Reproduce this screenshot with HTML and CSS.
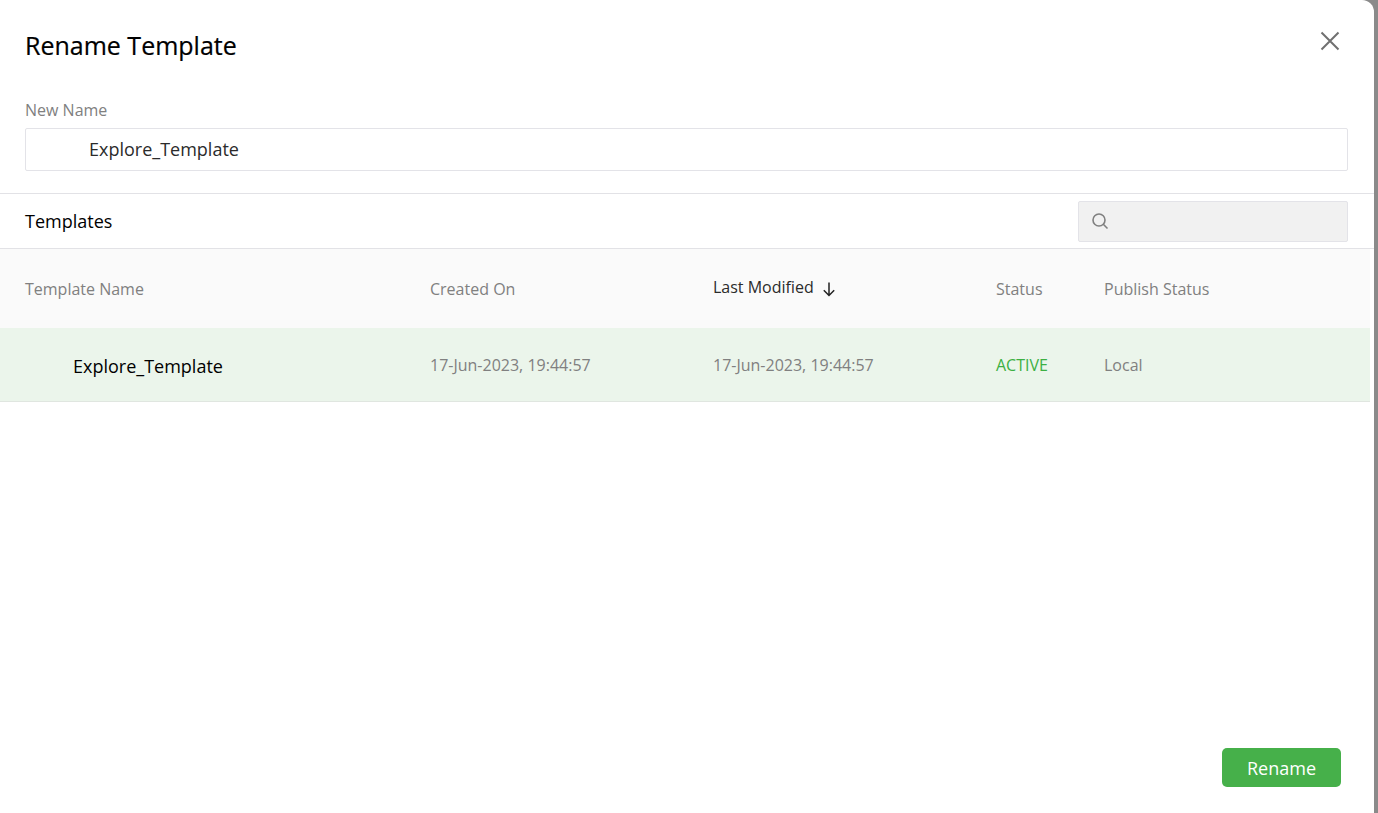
FILE: index.html
```html
<!DOCTYPE html>
<html lang="en">
<head>
<meta charset="utf-8">
<title>Rename Template</title>
<link rel="stylesheet" href="styles.css">
</head>
<body>
<div class="modal">
  <header class="modal-head">
    <h1 class="title">Rename Template</h1>
    <svg class="close" width="24" height="24" viewBox="0 0 24 24"><path d="M3.5 3.5 20.5 20.5M20.5 3.5 3.5 20.5"/></svg>
  </header>
  <section class="name-field">
    <div class="name-label">New Name</div>
    <div class="name-input">Explore_Template</div>
  </section>
  <div class="toolbar">
    <div class="toolbar-title">Templates</div>
    <div class="search">
      <svg width="18" height="18" viewBox="0 0 18 18"><circle cx="8" cy="8" r="6"/><path d="M12.3 12.3 16.5 16.5"/></svg>
    </div>
  </div>
  <div class="table">
    <div class="row row-head">
      <div class="cell c-name">Template Name</div>
      <div class="cell c-created">Created On</div>
      <div class="cell c-mod sorted">Last Modified
        <svg class="sort" width="16" height="16" viewBox="0 0 16 16"><path d="M8 1.5V14.5M2.8 9.3 8 14.5 13.2 9.3"/></svg>
      </div>
      <div class="cell c-status">Status</div>
      <div class="cell c-pub">Publish Status</div>
    </div>
    <div class="row row-body">
      <div class="cell c-name tname">Explore_Template</div>
      <div class="cell c-created">17-Jun-2023, 19:44:57</div>
      <div class="cell c-mod">17-Jun-2023, 19:44:57</div>
      <div class="cell c-status active">ACTIVE</div>
      <div class="cell c-pub">Local</div>
    </div>
  </div>
  <footer class="modal-foot">
    <button class="rename" type="button">Rename</button>
  </footer>
</div>
</body>
</html>
```
FILE: styles.css
```css
* { box-sizing: border-box; }
html, body { height: 100%; }
body {
  margin: 0;
  overflow: hidden;
  background: #8a8a8a;
  font-family: "Open Sans", "Noto Sans", sans-serif;
  font-size: 16px;
  color: #808080;
}
.modal {
  width: 1374px;
  height: 813px;
  background: #fff;
  border-radius: 0 0 0 0;
  border-top-right-radius: 12px;
  display: flex;
  flex-direction: column;
}
.modal-head {
  height: 98px;
  flex: none;
  display: flex;
  justify-content: space-between;
  align-items: flex-start;
  padding: 27px 32px 0 25px;
}
.title {
  margin: 0;
  font-size: 25px;
  line-height: 36px;
  font-weight: 400;
  color: #000;
  -webkit-text-stroke: 0.2px #000;
}
.close { margin-top: 2px; fill: none; stroke: #707070; stroke-width: 2; }
.name-field { padding: 0 26px 0 25px; height: 95px; flex: none; }
.name-label { height: 30px; line-height: 24px; font-size: 16px; color: #808080; }
.name-input {
  height: 43px;
  border: 1px solid #e3e3e8;
  border-radius: 2px;
  padding-left: 63px;
  line-height: 41px;
  font-size: 18px;
  color: #2b2b2b;
}
.toolbar {
  height: 56px;
  flex: none;
  border-top: 1px solid #e2e2e6;
  border-bottom: 1px solid #e2e2e6;
  display: flex;
  align-items: center;
  justify-content: space-between;
  padding: 0 26px 0 25px;
}
.toolbar-title { font-size: 18px; font-weight: 600; color: #000; font-weight: 500; }
.search {
  width: 270px;
  height: 41px;
  background: #f1f1f1;
  border: 1px solid #e3e3e8;
  border-radius: 2px;
  display: flex;
  align-items: center;
  padding-left: 12px;
}
.search svg { fill: none; stroke: #808080; stroke-width: 1.6; }
.table { width: 1370px; flex: 1; }
.row { display: flex; align-items: center; }
.row-head { height: 79px; background: #fafafa; }
.row-body { height: 74px; background: #ebf5eb; border-bottom: 1px solid #e0e6e0; }
.cell { flex: none; font-size: 16px; line-height: 24px; }
.c-name { width: 430px; padding-left: 25px; }
.c-created { width: 283px; }
.c-mod { width: 283px; }
.c-status { width: 108px; }
.c-pub { flex: 1; }
.sorted { color: #2b2b2b; display: flex; align-items: center; gap: 7px; margin-top: -3px; }
.sort { fill: none; stroke: #222; stroke-width: 1.5; margin-top: 4px; }
.tname { padding-left: 73px; font-size: 18px; color: #000; line-height: 26px; margin-top: 2px; }
.active { color: #3cb043; }
.modal-foot {
  flex: none;
  height: 65px;
  padding-right: 33px;
  display: flex;
  justify-content: flex-end;
  align-items: flex-start;
}
.rename {
  width: 119px;
  height: 39px;
  border: 0;
  border-radius: 5px;
  background: #46b04a;
  color: #fff;
  font-family: inherit;
  font-size: 18px;
  font-weight: 500;
  padding: 0;
}
```
